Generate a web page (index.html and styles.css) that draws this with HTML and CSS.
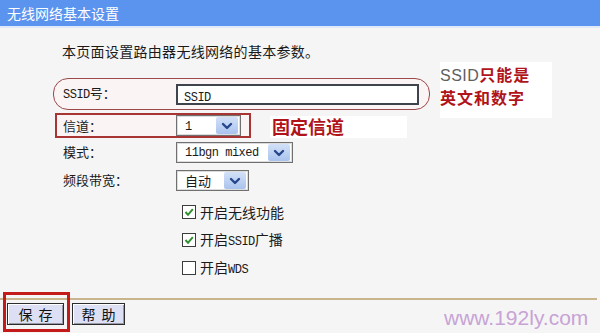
FILE: index.html
```html
<!DOCTYPE html>
<html lang="zh-CN">
<head>
<meta charset="utf-8">
<title>无线网络基本设置</title>
<link rel="stylesheet" href="styles.css">
</head>
<body>
<div class="page">
  <div class="titlebar">无线网络基本设置</div>
  <p class="intro">本页面设置路由器无线网络的基本参数。</p>

  <div class="row row-ssid">
    <span class="label"><span class="m">SSID</span>号：</span>
    <span class="input"><span class="m">SSID</span></span>
  </div>

  <div class="row row-channel">
    <span class="label">信道：</span>
    <span class="select sel-channel"><span class="val"><span class="m">1</span></span><span class="arrow"><svg viewBox="0 0 22 17" width="22" height="17"><path d="M7 7 L11 11 L15 7" fill="none" stroke="#26478c" stroke-width="2.4" stroke-linecap="round" stroke-linejoin="round"/></svg></span></span>
  </div>

  <div class="row row-plain">
    <span class="label">模式：</span>
    <span class="select sel-mode"><span class="val"><span class="m">11bgn mixed</span></span><span class="arrow"><svg viewBox="0 0 22 17" width="22" height="17"><path d="M7 7 L11 11 L15 7" fill="none" stroke="#26478c" stroke-width="2.4" stroke-linecap="round" stroke-linejoin="round"/></svg></span></span>
  </div>

  <div class="row row-plain">
    <span class="label">频段带宽：</span>
    <span class="select sel-band"><span class="val">自动</span><span class="arrow"><svg viewBox="0 0 22 17" width="22" height="17"><path d="M7 7 L11 11 L15 7" fill="none" stroke="#26478c" stroke-width="2.4" stroke-linecap="round" stroke-linejoin="round"/></svg></span></span>
  </div>

  <div class="checks">
    <div class="check"><span class="box"><svg viewBox="0 0 12 12" width="12" height="12"><path d="M2.5 6 L5 8.8 L9.8 3.2" fill="none" stroke="#2f8f2f" stroke-width="2"/></svg></span><span class="ctext">开启无线功能</span></div>
    <div class="check"><span class="box"><svg viewBox="0 0 12 12" width="12" height="12"><path d="M2.5 6 L5 8.8 L9.8 3.2" fill="none" stroke="#2f8f2f" stroke-width="2"/></svg></span><span class="ctext">开启<span class="m">SSID</span>广播</span></div>
    <div class="check"><span class="box"></span><span class="ctext">开启<span class="m">WDS</span></span></div>
  </div>

  <div class="sep"></div>

  <div class="footer">
    <button class="btn btn-save">保 存</button>
    <button class="btn btn-help">帮 助</button>
  </div>

  <div class="note note-ssid">
    <div class="nl"><span class="lt">SSID</span>只能是</div>
    <div class="nl">英文和数字</div>
  </div>
  <div class="note note-ch">固定信道</div>
  <div class="save-frame"></div>
  <div class="watermark">www.192ly.com</div>
</div>
</body>
</html>
```

FILE: styles.css
```css
html, body {
  margin: 0;
  padding: 0;
}
body {
  background: #f5f5f5;
  font-family: "Noto Sans CJK SC", "Liberation Sans", sans-serif;
  color: #1a1a1a;
}
.page {
  position: relative;
  width: 600px;
  height: 333px;
  overflow: hidden;
}
.titlebar {
  height: 26px;
  line-height: 26px;
  background: #5b94ee;
  color: #fff;
  font-size: 14px;
  padding-left: 7px;
  border-bottom: 2px solid #dfe9f7;
}
.intro {
  margin: 13px 0 0 62px;
  font-size: 14px;
  line-height: 20px;
  letter-spacing: 0.3px;
}
.m {
  font-family: "Liberation Mono", monospace;
  font-size: 12px;
  letter-spacing: -0.5px;
}
.row {
  display: flex;
  align-items: center;
  box-sizing: border-box;
}
.label {
  flex: none;
  width: 113px;
  font-size: 13px;
  line-height: 18px;
}
.row-ssid {
  margin: 17px 0 0 53px;
  width: 377px;
  height: 32px;
  border: 1px solid #9b4848;
  border-radius: 15px;
  padding-left: 9px;
  background: #faf4f4;
}
.input {
  flex: none;
  width: 243px;
  height: 21px;
  box-sizing: border-box;
  border: 2px solid #3f434b;
  background: #fff;
  padding-left: 6px;
  line-height: 17px;
}
.row-channel {
  margin: 3px 0 0 55px;
  width: 196px;
  height: 25px;
  border: 2px solid #a83434;
  padding-left: 6px;
  background: #faf4f4;
}
.row-plain {
  margin-left: 63px;
  height: 28px;
}
.select {
  flex: none;
  display: flex;
  align-items: center;
  justify-content: space-between;
  height: 21px;
  box-sizing: border-box;
  border: 1px solid #707070;
  box-shadow: inset 0 0 0 1px #dcdcdc;
  background: #fff;
  padding: 0 2px 0 8px;
}
.select .val {
  font-size: 13px;
  line-height: 17px;
}
.sel-channel { width: 65px; }
.sel-mode { width: 117px; }
.sel-band { width: 73px; }
.arrow {
  display: block;
  width: 22px;
  height: 17px;
  background: linear-gradient(#d3e1f7, #a9c3ee);
  border-radius: 2px;
}
.arrow svg { display: block; }
.checks {
  margin-top: 4px;
  padding-left: 182px;
}
.check {
  display: flex;
  align-items: center;
  height: 28px;
}
.ctext {
  font-size: 14px;
  line-height: 18px;
}
.box {
  display: flex;
  align-items: center;
  justify-content: center;
  width: 14px;
  height: 14px;
  box-sizing: border-box;
  border: 1px solid #3c3c3c;
  background: #fff;
  margin-right: 4px;
}
.box svg { display: block; }
.sep {
  margin-top: 16px;
  width: 597px;
  height: 2px;
  background: #c9b48e;
}
.footer {
  display: flex;
  gap: 8px;
  padding: 3px 0 0 7px;
}
.btn {
  height: 22px;
  padding: 0;
  border: 1px solid #2c2c2c;
  background: #dde0f4;
  box-shadow: inset 1px 1px 0 #fff, inset -1px -1px 0 #9a9aa6;
  font-family: "Noto Sans CJK SC", sans-serif;
  font-size: 14px;
  line-height: 18px;
  color: #111;
  word-spacing: 3px;
}
.btn-save { width: 57px; }
.btn-help { width: 53px; }
.note {
  position: absolute;
  background: #fff;
  color: #b0141a;
  font-weight: 700;
  box-sizing: border-box;
}
.note-ssid {
  left: 440px;
  top: 62px;
  width: 112px;
  height: 56px;
  padding-top: 1px;
  font-size: 16px;
}
.nl {
  height: 23px;
  line-height: 23px;
  white-space: nowrap;
  letter-spacing: 1px;
}
.note-ssid .lt {
  font-family: "Liberation Sans", sans-serif;
  font-weight: 400;
  font-size: 16px;
  letter-spacing: 0.5px;
  color: #606060;
}
.note-ch {
  left: 270px;
  top: 116px;
  width: 137px;
  height: 22px;
  padding-left: 2px;
  font-size: 18px;
  line-height: 20px;
}
.save-frame {
  position: absolute;
  left: 3px;
  top: 292px;
  width: 67px;
  height: 40px;
  box-sizing: border-box;
  border: 3px solid #c41a1a;
}
.watermark {
  position: absolute;
  left: 444px;
  top: 305px;
  font-family: "Liberation Sans", sans-serif;
  font-size: 21px;
  line-height: 26px;
  color: #c8a3d5;
}
```
